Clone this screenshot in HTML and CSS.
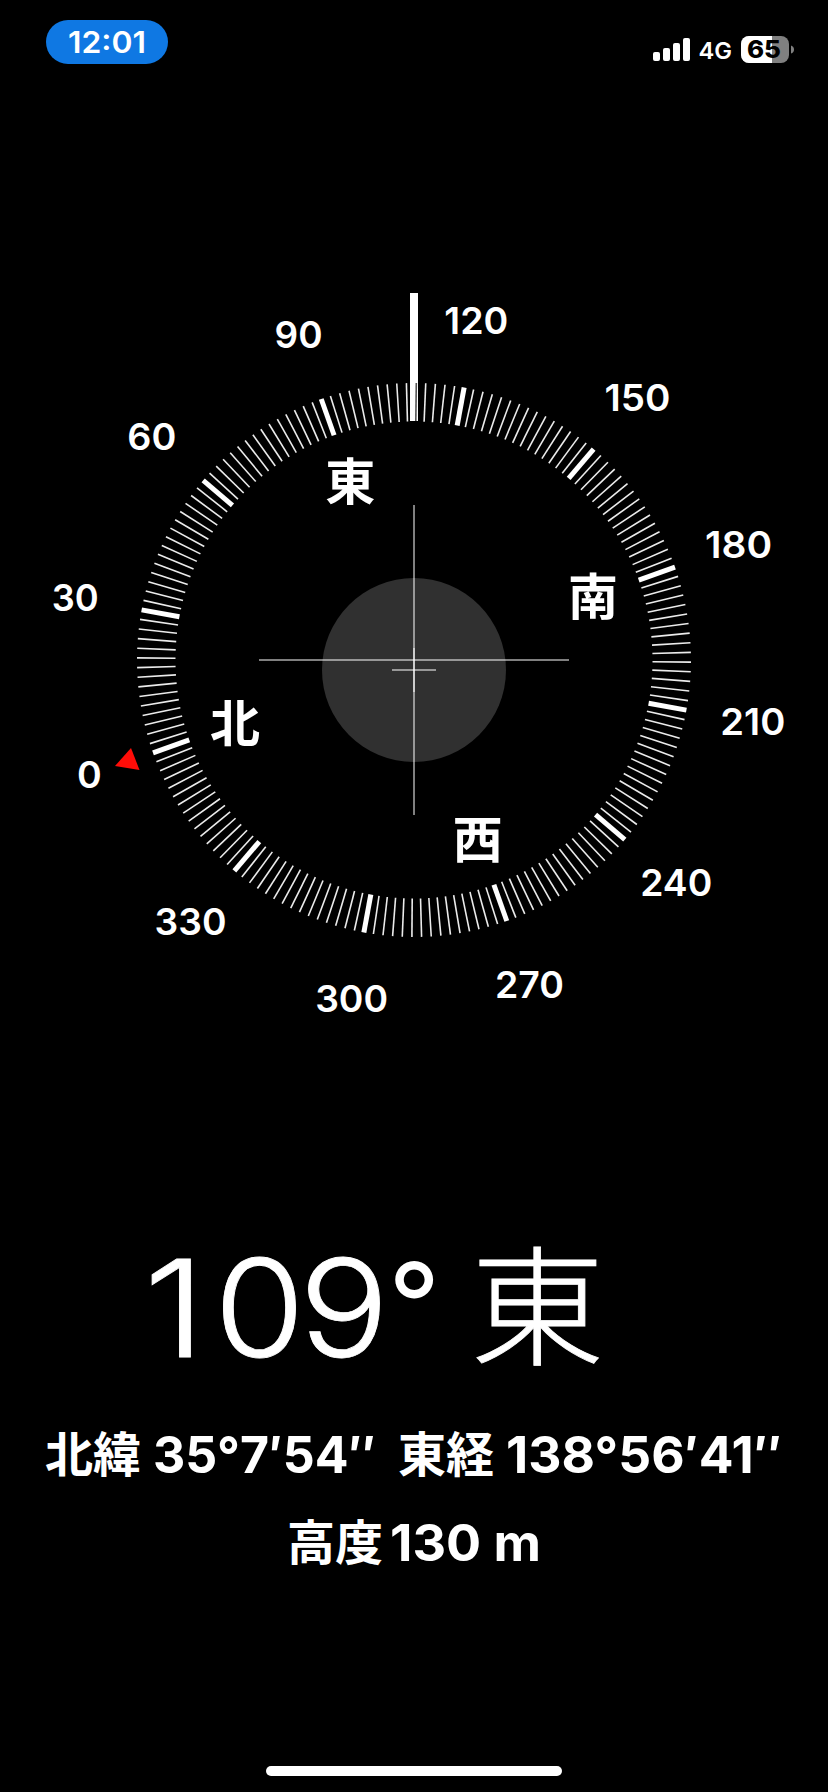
FILE: index.html
```
<!DOCTYPE html>
<html lang="ja">
<head>
<meta charset="utf-8">
<title>コンパス</title>
<link rel="stylesheet" href="styles.css">
</head>
<body>
<main class="screen">
  <header class="status">
    <div class="pill"><svg width="80" height="40"><text x="1" y="31" textLength="78" lengthAdjust="spacingAndGlyphs" class="clock">12:01</text></svg></div>
    <svg class="indicators" width="144" height="32" viewBox="652 34 144 32">
      <g fill="#fff">
        <rect x="653" y="52" width="7" height="9" rx="2"/>
        <rect x="663" y="48" width="7" height="13" rx="2"/>
        <rect x="673" y="43" width="7" height="18" rx="2"/>
        <rect x="683" y="38" width="7" height="23" rx="2"/>
      </g>
      <text x="698.5" y="59" textLength="33.500" lengthAdjust="spacingAndGlyphs" class="net">4G</text>
      <clipPath id="cell"><rect x="741" y="36" width="48" height="27" rx="8"/></clipPath>
      <g clip-path="url(#cell)">
        <rect x="741" y="36" width="48" height="27" fill="#808080"/>
        <rect x="741" y="36" width="31" height="27" fill="#fff"/>
      </g>
      <path d="M791 45.500 Q794 46.500 794 49.500 Q794 52.500 791 53.500Z" fill="#808080"/>
      <text x="747" y="58" textLength="34" lengthAdjust="spacingAndGlyphs" class="charge">65</text>
    </svg>
  </header>
  <svg class="compass" width="828" height="800" viewBox="0 260 828 800">
    <circle cx="414" cy="670" r="92" fill="#303030"/>
    <g fill="#fff" fill-opacity=".5">
      <rect x="413" y="505" width="2" height="310"/>
      <rect x="259" y="659" width="310" height="2"/>
      <rect x="413" y="648" width="2" height="44"/>
      <rect x="392" y="669" width="44" height="2"/>
    </g>
    <path d="M410 293H418V421H410Z" fill="#fff"/>
    <path d="M416.300 383L415.800 421" stroke="#555" stroke-width="1.600"/>
    <g id="dial"></g>
    <path d="M131 748 L115 766 L139.500 770Z" fill="#ff0d08"/>
  </svg>
  <section class="readout">
    <svg width="828" height="340" viewBox="0 1240 828 340">
      <text x="143.500" y="1356.500" class="heading" textLength="62" lengthAdjust="spacingAndGlyphs">1</text>
      <text x="214" y="1357" class="heading" textLength="91" lengthAdjust="spacingAndGlyphs">0</text>
      <text x="299" y="1357" class="heading" textLength="90" lengthAdjust="spacingAndGlyphs">9</text>
      <text x="388" y="1345" class="degree-sign">°</text>
      <text transform="translate(470.500 1354.500) scale(1 .965)" class="heading-dir">東</text>
      <text x="45" y="1472" class="kanji" textLength="96">北緯</text>
      <text x="153" y="1473" class="coord" textLength="223" lengthAdjust="spacingAndGlyphs">35°7′54″</text>
      <text x="398" y="1472" class="kanji" textLength="96">東経</text>
      <text x="506" y="1473" class="coord" textLength="276" lengthAdjust="spacingAndGlyphs">138°56′41″</text>
      <text x="287" y="1560" class="kanji" textLength="96">高度</text>
      <text x="390" y="1561" class="coord" textLength="151" lengthAdjust="spacingAndGlyphs">130 m</text>
    </svg>
  </section>
  <div class="home"></div>
</main>
<script src="compass.js"></script>
</body>
</html>
```
FILE: styles.css
```
body {
  margin: 0;
  background: #000;
  color: #fff;
  font-family: Inter, "Noto Sans CJK JP", sans-serif;
}
.screen {
  display: flex;
  flex-direction: column;
  align-items: center;
  width: 828px;
  height: 1792px;
  overflow: hidden;
}
svg { display: block; overflow: visible; }
text { fill: #fff; }
.status {
  display: flex;
  justify-content: space-between;
  align-items: flex-start;
  box-sizing: border-box;
  width: 100%;
  height: 260px;
  padding: 20px 32px 0 46px;
}
.pill {
  display: flex;
  align-items: center;
  justify-content: center;
  width: 122px;
  height: 44px;
  border-radius: 22px;
  background: #0f78e3;
}
.indicators { margin-top: 14px; }
.clock { font-size: 29.5px; font-weight: 600; }
.net { font-size: 23px; font-weight: 600; }
.charge { font-size: 24px; font-weight: 800; fill: #000; }
.tick { stroke: #fff; stroke-width: 1.6; stroke-opacity: .92; }
.tick-major { stroke: #fff; stroke-width: 5; }
.degree { font-size: 37.5px; font-weight: 560; text-anchor: middle; }
.direction {
  font-family: "Noto Sans CJK JP", sans-serif;
  font-size: 50px;
  font-weight: 700;
  text-anchor: middle;
}
.readout { height: 340px; margin-top: 180px; }
.heading { font-size: 135px; font-weight: 350; stroke: #fff; stroke-width: .8; }
.degree-sign { font-size: 115px; font-weight: 420; }
.heading-dir {
  font-family: "Noto Sans CJK JP", sans-serif;
  font-size: 134px;
  font-weight: 300;
  stroke: #fff;
  stroke-width: .8;
}
.kanji { font-family: "Noto Sans CJK JP", sans-serif; font-size: 48px; font-weight: 700; }
.coord { font-size: 51px; font-weight: 700; }
.home {
  width: 296px;
  height: 10px;
  margin-top: 186px;
  border-radius: 5px;
  background: #fff;
}
```
FILE: compass.js
```
const NS = 'http://www.w3.org/2000/svg';
const dial = document.getElementById('dial');
const heading = 109.57;
const cx = 414, cy = 660;

function point(deg, r) {
  const a = (deg - heading) * Math.PI / 180;
  return [cx + r * Math.sin(a), cy - r * Math.cos(a)];
}
function add(name, attrs, text) {
  const el = document.createElementNS(NS, name);
  for (const key in attrs) el.setAttribute(key, attrs[key]);
  if (text) el.textContent = text;
  dial.appendChild(el);
}
for (let d = 0; d < 360; d += 2) {
  if (d === 110) continue;
  const [x1, y1] = point(d, 277);
  const [x2, y2] = point(d, 238.5);
  add('line', { x1, y1, x2, y2, class: d % 30 ? 'tick' : 'tick-major' });
}
const widths = { 0: 24, 30: 47, 60: 49, 90: 48, 120: 64, 150: 66, 180: 67, 210: 65, 240: 72, 270: 69, 300: 73, 330: 72 };
for (let d = 0; d < 360; d += 30) {
  const [x, y] = point(d, 344.5);
  const attrs = { x, y: y + 13, class: 'degree' };
  if (d) {
    attrs.textLength = widths[d];
    attrs.lengthAdjust = 'spacingAndGlyphs';
  }
  add('text', attrs, String(d));
}
['北', '東', '南', '西'].forEach((name, i) => {
  const [x, y] = point(i * 90, 190);
  add('text', { x, y: y + 18.7, class: 'direction' }, name);
});
```
